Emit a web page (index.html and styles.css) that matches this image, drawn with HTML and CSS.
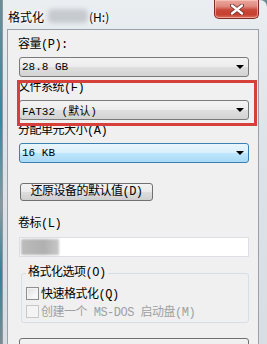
FILE: index.html
```html
<!DOCTYPE html>
<html lang="zh-CN">
    <head>
        <meta charset="UTF-8">
        <title>格式化</title>
        <link rel="stylesheet" href="styles.css">
    </head>
    <body>
        <div class="window">
            <div class="titlebar">
                <span class="title">格式化</span>
                <span class="blur-name"></span>
                <span class="title drive">(H:)</span>
                <span class="close-btn">
                    <svg width="14" height="11" viewBox="0 0 14 11">
                        <path d="M2 1.5 L12 9.5 M12 1.5 L2 9.5" stroke="#6a2a24" stroke-width="4" stroke-linecap="round"/>
                        <path d="M2 1.5 L12 9.5 M12 1.5 L2 9.5" stroke="#fff" stroke-width="2.4" stroke-linecap="round"/>
                    </svg>
                </span>
            </div>
            <div class="client">
                <div class="label">容量(P):</div>
                <div class="combo"><span>28.8 GB</span><i class="arrow"></i></div>

                <div class="label">文件系统(F)</div>
                <div class="combo"><span>FAT32 (默认)</span><i class="arrow"></i></div>

                <div class="label">分配单元大小(A)</div>
                <div class="combo hot"><span>16 KB</span><i class="arrow"></i></div>

                <button class="btn restore">还原设备的默认值(D)</button>

                <div class="label vol">卷标(L)</div>
                <div class="textbox"><span class="blur-text"></span></div>

                <fieldset class="group">
                    <legend>格式化选项(O)</legend>
                    <label class="check"><span class="box"></span>快速格式化(Q)</label>
                    <label class="check disabled"><span class="box"></span>创建一个 MS-DOS 启动盘(M)</label>
                </fieldset>

                <button class="btn start"></button>
            </div>
            <!-- 标注框 -->
            <div class="highlight"></div>
        </div>
    </body>
</html>
```

FILE: styles.css
```css
html, body {
    margin: 0;
    padding: 0;
}
body {
    width: 267px;
    height: 344px;
    overflow: hidden;
    background: linear-gradient(180deg, #6f8c96 0%, #2d8d9e 35%, #8a98a0 60%, #2f8596 80%, #7d8a90 100%);
    font-family: "Liberation Mono", "Noto Sans CJK SC", monospace;
    font-size: 12px;
    letter-spacing: -0.5px;
    color: #000;
}
.window {
    position: relative;
    margin-left: 2px;
    width: 265px;
    height: 360px;
    background: linear-gradient(180deg, #eaeef1 0%, #dde3e8 40%, #d7dde2 100%);
    border-left: 1px solid #8d979f;
    border-top-right-radius: 7px;
    box-sizing: border-box;
}
.titlebar {
    height: 29px;
    display: flex;
    align-items: flex-start;
    padding-left: 5px;
}
.title {
    font-family: "Noto Sans CJK SC", sans-serif;
    font-size: 12px;
    letter-spacing: 0;
    line-height: 16px;
    margin-top: 9px;
    text-shadow: 0 0 6px #fff, 0 0 3px #fff;
}
.blur-name {
    width: 40px;
    height: 14px;
    margin-top: 9px;
    margin-left: 4px;
    background: #c6cbd0;
    border-radius: 5px;
    filter: blur(2px);
}
.drive {
    margin-left: 1px;
}
.close-btn {
    margin-left: auto;
    margin-right: 8px;
    width: 45px;
    height: 19px;
    box-sizing: border-box;
    border: 1px solid #7d2b23;
    border-top: none;
    border-radius: 0 0 5px 5px;
    background: linear-gradient(180deg, #eba89f 0%, #e08a7e 35%, #c9483a 55%, #c7402f 80%, #d8705c 100%);
    box-shadow: inset 0 0 0 1px rgba(255, 210, 200, 0.55);
    display: flex;
    justify-content: center;
    align-items: center;
}
.client {
    margin-left: 4px;
    width: 252px;
    height: 330px;
    background: #f0f0f0;
    border: 1px solid #98a2aa;
    box-sizing: border-box;
    padding-top: 7px;
    padding-left: 10px;
}
.label {
    line-height: 16px;
    height: 16px;
    white-space: nowrap;
}
.combo {
    margin: 4px 0 3px 1px;
    width: 230px;
    height: 20px;
    box-sizing: border-box;
    border: 1px solid #7a7a7a;
    border-radius: 3px;
    background: linear-gradient(180deg, #f4f4f4 0%, #ececec 48%, #dedede 52%, #d3d3d3 100%);
    display: flex;
    align-items: center;
    padding-left: 2px;
    font-size: 11px;
    letter-spacing: 0;
}
.combo span {
    flex: 1;
    white-space: nowrap;
}
.combo.hot {
    border-color: #3c7fb1;
    background: linear-gradient(180deg, #eaf6fd 0%, #d9f0fc 48%, #bee6fd 52%, #a7d9f5 100%);
}
.arrow {
    width: 0;
    height: 0;
    border-left: 4px solid transparent;
    border-right: 4px solid transparent;
    border-top: 4px solid #000;
    margin-right: 4px;
}
.label:nth-of-type(3) {
    margin-top: 2px;
}
.btn {
    display: block;
    margin: 20px 0 0 2px;
    width: 133px;
    height: 18px;
    padding: 0;
    border: 1px solid #707070;
    border-radius: 3px;
    background: linear-gradient(180deg, #f2f2f2 0%, #ebebeb 48%, #dddddd 52%, #cfcfcf 100%);
    font-family: "Liberation Mono", "Noto Sans CJK SC", monospace;
    font-size: 12px;
    letter-spacing: -0.5px;
    line-height: 16px;
    color: #000;
}
.vol {
    margin-top: 15px;
}
.textbox {
    margin: 5px 0 0 1px;
    width: 230px;
    height: 20px;
    box-sizing: border-box;
    border: 1px solid #dde1e5;
    background: #fff;
    padding: 1px 0 0 1px;
}
.blur-text {
    display: block;
    width: 38px;
    height: 16px;
    background: linear-gradient(90deg, #bcbcbc 0%, #b0b0b0 60%, #c8c8c8 100%);
    filter: blur(1px);
}
.group {
    margin: 8px 0 0 3px;
    width: 228px;
    box-sizing: border-box;
    border: 1px solid #d5dfe5;
    border-radius: 3px;
    padding: 4px 0 3px 4px;
}
.group legend {
    padding: 0 2px;
    line-height: 16px;
    font-size: 12px;
}
.check {
    display: flex;
    align-items: center;
    height: 16px;
    white-space: nowrap;
}
.check + .check {
    margin-top: 2px;
}
.box {
    width: 13px;
    height: 13px;
    box-sizing: border-box;
    border: 1px solid #8e8f8f;
    background: linear-gradient(135deg, #dcdcdc 0%, #f4f4f4 60%, #ffffff 100%);
    box-shadow: inset 0 0 0 1px #f4f4f4;
    margin-right: 2px;
}
.check.disabled {
    color: #a0a0a0;
}
.check.disabled .box {
    border-color: #c8c8c8;
    background: #f4f4f4;
}
.start {
    margin: 15px 0 0 1px;
    width: 230px;
    height: 22px;
}
.highlight {
    position: absolute;
    left: 14px;
    top: 80px;
    width: 240px;
    height: 46px;
    box-sizing: border-box;
    border: 3px solid #d63f3a;
}
```
